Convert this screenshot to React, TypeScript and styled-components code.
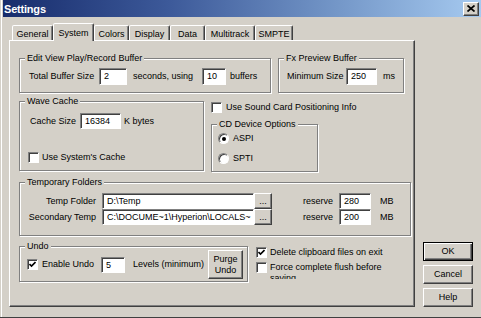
import React from "react";
import styled, { createGlobalStyle } from "styled-components";

const GlobalStyle = createGlobalStyle`
  html, body {
    margin: 0;
    padding: 0;
    background: #d4d0c8;
  }
  body {
    font-family: "Liberation Sans", Arial, sans-serif;
    font-size: 9px;
    color: #000;
  }
  * {
    box-sizing: border-box;
  }
`;

const Window = styled.div`
  width: 481px;
  height: 318px;
  display: flex;
  flex-direction: column;
  background: #d4d0c8;
  padding-left: 3px;
  border-bottom: 1px solid #404040;
  box-shadow: inset 1px 0 0 #d4d0c8, inset 2px 0 0 #ffffff;
  overflow: hidden;
`;

const TitleBar = styled.div`
  height: 17px;
  flex-shrink: 0;
  display: flex;
  align-items: center;
  justify-content: space-between;
  padding: 0 2px 0 1px;
  background: linear-gradient(to right, #172c6c 0%, #3d5a9a 35%, #7497c8 70%, #a6caf0 100%);
`;

const Title = styled.span`
  color: #ffffff;
  font-size: 11px;
  font-weight: bold;
  letter-spacing: -0.2px;
`;

const CloseButton = styled.div`
  width: 16px;
  height: 14px;
  display: flex;
  align-items: center;
  justify-content: center;
  background: #d4d0c8;
  border: 1px solid;
  border-color: #ffffff #404040 #404040 #ffffff;
  box-shadow: inset -1px -1px 0 #808080;
`;

const Body = styled.div`
  flex: 1;
  display: flex;
  padding: 6px 0 10px 6px;
`;

const TabArea = styled.div`
  width: 406px;
  display: flex;
  flex-direction: column;
`;

const TabStrip = styled.div`
  height: 17px;
  display: flex;
  align-items: flex-end;
  padding-left: 3px;
`;

const Tab = styled.div<{ $w: number; $active?: boolean }>`
  position: relative;
  z-index: ${(p) => (p.$active ? 1 : 0)};
  width: ${(p) => p.$w}px;
  height: ${(p) => (p.$active ? 18 : 15)}px;
  margin-bottom: ${(p) => (p.$active ? -1 : 0)}px;
  display: flex;
  align-items: center;
  justify-content: center;
  padding-top: ${(p) => (p.$active ? 0 : 1)}px;
  background: #d4d0c8;
  border: 1px solid;
  border-bottom: none;
  border-color: #ffffff #404040 transparent #ffffff;
  border-radius: 2px 2px 0 0;
  box-shadow: inset -1px 0 0 #808080;
  white-space: nowrap;
`;

const Panel = styled.div`
  width: 406px;
  height: 267px;
  display: flex;
  flex-direction: column;
  padding-left: 9px;
  border: 1px solid;
  border-color: #ffffff #404040 #404040 #ffffff;
  box-shadow: inset -1px -1px 0 #808080;
`;

const PanelRow = styled.div<{ $mt: number; $gap: number }>`
  display: flex;
  align-items: flex-start;
  margin-top: ${(p) => p.$mt}px;
  gap: ${(p) => p.$gap}px;
`;

const Group = styled.div<{ $w: number; $h: number; $pad: string; $mt?: number }>`
  position: relative;
  width: ${(p) => p.$w}px;
  height: ${(p) => p.$h}px;
  margin-top: ${(p) => p.$mt ?? 0}px;
  padding: ${(p) => p.$pad};
  display: flex;
  flex-direction: column;
  border: 1px solid #808080;
  box-shadow: 1px 1px 0 #ffffff, inset 1px 1px 0 #ffffff;
`;

const Legend = styled.span`
  position: absolute;
  top: -6px;
  left: 5px;
  padding: 0 2px;
  line-height: 11px;
  background: #d4d0c8;
  white-space: nowrap;
`;

const Line = styled.div<{ $mt?: number; $ml?: number; $h?: number }>`
  display: flex;
  align-items: center;
  margin-top: ${(p) => p.$mt ?? 0}px;
  margin-left: ${(p) => p.$ml ?? 0}px;
  height: ${(p) => (p.$h ? `${p.$h}px` : "auto")};
`;

const Caption = styled.span<{ $w?: number; $ml?: number; $right?: boolean }>`
  display: inline-block;
  flex-shrink: 0;
  width: ${(p) => (p.$w ? `${p.$w}px` : "auto")};
  margin-left: ${(p) => p.$ml ?? 0}px;
  text-align: ${(p) => (p.$right ? "right" : "left")};
  white-space: nowrap;
  line-height: 11px;
`;

const Field = styled.span<{ $w: number; $h?: number; $ml?: number }>`
  display: block;
  flex-shrink: 0;
  width: ${(p) => p.$w}px;
  height: ${(p) => p.$h ?? 17}px;
  margin-left: ${(p) => p.$ml ?? 0}px;
  padding: 0 1px 0 4px;
  line-height: ${(p) => (p.$h ?? 17) - 2}px;
  background: #ffffff;
  border: 1px solid;
  border-color: #808080 #ffffff #ffffff #808080;
  box-shadow: inset 1px 1px 0 #404040;
  white-space: nowrap;
  overflow: hidden;
`;

const Box = styled.span`
  width: 11px;
  height: 11px;
  flex-shrink: 0;
  display: inline-flex;
  align-items: center;
  justify-content: center;
  background: #ffffff;
  border: 1px solid;
  border-color: #808080 #ffffff #ffffff #808080;
  box-shadow: inset 1px 1px 0 #404040;
`;

const RadioDot = styled.span<{ $on?: boolean }>`
  width: 11px;
  height: 11px;
  flex-shrink: 0;
  display: inline-flex;
  align-items: center;
  justify-content: center;
  border-radius: 50%;
  background: #ffffff;
  border: 1px solid;
  border-color: #808080 #ffffff #ffffff #808080;
  box-shadow: inset 1px 1px 0 #404040;
  &::after {
    content: "";
    width: 4px;
    height: 4px;
    border-radius: 50%;
    background: ${(p) => (p.$on ? "#000" : "transparent")};
  }
`;

const CheckItem = styled.div<{ $gap?: number }>`
  display: flex;
  align-items: flex-start;
  gap: ${(p) => p.$gap ?? 4}px;
`;

const WrapText = styled.span`
  width: 125px;
  line-height: 11px;
  max-height: 17px;
  overflow: hidden;
`;

const Stack = styled.div<{ $w?: number; $gap?: number; $mt?: number }>`
  display: flex;
  flex-direction: column;
  width: ${(p) => (p.$w ? `${p.$w}px` : "auto")};
  gap: ${(p) => p.$gap ?? 0}px;
  margin-top: ${(p) => p.$mt ?? 0}px;
`;

const WinButton = styled.div<{ $w: number; $h: number; $default?: boolean }>`
  width: ${(p) => p.$w}px;
  height: ${(p) => p.$h}px;
  flex-shrink: 0;
  display: flex;
  align-items: center;
  justify-content: center;
  text-align: center;
  line-height: 11px;
  background: #d4d0c8;
  border: 1px solid;
  border-color: ${(p) => (p.$default ? "#000" : "#ffffff #404040 #404040 #ffffff")};
  box-shadow: ${(p) =>
    p.$default
      ? "inset 1px 1px 0 #ffffff, inset -1px -1px 0 #404040, inset -2px -2px 0 #808080"
      : "inset -1px -1px 0 #808080"};
`;

const ButtonColumn = styled.div`
  width: 50px;
  margin-left: 8px;
  display: flex;
  flex-direction: column;
  justify-content: flex-end;
  gap: 4px;
`;

const CheckMark = () => (
  <svg width="7" height="7" viewBox="0 0 7 7">
    <polyline points="0.5,3 2.5,5 6.5,1" fill="none" stroke="#000" strokeWidth="1.6" />
  </svg>
);

const Check = ({ checked }: { checked?: boolean }) => <Box>{checked && <CheckMark />}</Box>;

const tabs = [
  { label: "General", w: 41 },
  { label: "System", w: 41, active: true },
  { label: "Colors", w: 35 },
  { label: "Display", w: 41 },
  { label: "Data", w: 35 },
  { label: "Multitrack", w: 50 },
  { label: "SMPTE", w: 38 },
];

const folders = [
  { label: "Temp Folder", path: "D:\\Temp", reserve: "280" },
  { label: "Secondary Temp", path: "C:\\DOCUME~1\\Hyperion\\LOCALS~", reserve: "200" },
];

export default function App() {
  return (
    <>
      <GlobalStyle />
      <Window>
        <TitleBar>
          <Title>Settings</Title>
          <CloseButton>
            <svg width="8" height="7" viewBox="0 0 8 7">
              <path d="M0.5 0.5 L7.5 6.5 M7.5 0.5 L0.5 6.5" stroke="#000" strokeWidth="1.7" />
            </svg>
          </CloseButton>
        </TitleBar>
        <Body>
          <TabArea>
            <TabStrip>
              {tabs.map((t) => (
                <Tab key={t.label} $w={t.w} $active={t.active}>
                  {t.label}
                </Tab>
              ))}
            </TabStrip>
            <Panel>
              <PanelRow $mt={17} $gap={7}>
                <Group $w={252} $h={35} $pad="9px 0 0 9px">
                  <Legend>Edit View Play/Record Buffer</Legend>
                  <Line>
                    <Caption $w={70}>Total Buffer Size</Caption>
                    <Field $w={28}>2</Field>
                    <Caption $ml={6} $w={69}>
                      seconds, using
                    </Caption>
                    <Field $w={24}>10</Field>
                    <Caption $ml={4}>buffers</Caption>
                  </Line>
                </Group>
                <Group $w={126} $h={35} $pad="9px 0 0 8px">
                  <Legend>Fx Preview Buffer</Legend>
                  <Line>
                    <Caption $w={59}>Minimum Size</Caption>
                    <Field $w={31}>250</Field>
                    <Caption $ml={6}>ms</Caption>
                  </Line>
                </Group>
              </PanelRow>

              <PanelRow $mt={8} $gap={7}>
                <Group $w={185} $h={70} $pad="11px 0 0 10px">
                  <Legend>Wave Cache</Legend>
                  <Line>
                    <Caption $w={50}>Cache Size</Caption>
                    <Field $w={41} $h={16}>
                      16384
                    </Field>
                    <Caption $ml={3}>K bytes</Caption>
                  </Line>
                  <Line $mt={23} $ml={-2}>
                    <CheckItem $gap={3}>
                      <Check />
                      <Caption>Use System's Cache</Caption>
                    </CheckItem>
                  </Line>
                </Group>
                <Stack $w={107} $mt={1}>
                  <CheckItem>
                    <Check />
                    <Caption>Use Sound Card Positioning Info</Caption>
                  </CheckItem>
                  <Group $w={107} $h={48} $mt={11} $pad="8px 0 0 6px">
                    <Legend>CD Device Options</Legend>
                    <Stack $gap={9}>
                      <CheckItem>
                        <RadioDot $on />
                        <Caption>ASPI</Caption>
                      </CheckItem>
                      <CheckItem>
                        <RadioDot />
                        <Caption>SPTI</Caption>
                      </CheckItem>
                    </Stack>
                  </Group>
                </Stack>
              </PanelRow>

              <PanelRow $mt={10} $gap={0}>
                <Group $w={392} $h={54} $pad="10px 0 0 0">
                  <Legend>Temporary Folders</Legend>
                  {folders.map((f) => (
                    <Line key={f.label}>
                      <Caption $w={76} $right>
                        {f.label}
                      </Caption>
                      <Field $ml={6} $w={152} $h={16}>
                        {f.path}
                      </Field>
                      <WinButton $w={18} $h={16}>
                        ...
                      </WinButton>
                      <Caption $w={61} $right>
                        reserve
                      </Caption>
                      <Field $ml={6} $w={32} $h={16}>
                        {f.reserve}
                      </Field>
                      <Caption $ml={9}>MB</Caption>
                    </Line>
                  ))}
                </Group>
              </PanelRow>

              <PanelRow $mt={10} $gap={8}>
                <Group $w={229} $h={36} $pad="3px 0 0 7px">
                  <Legend>Undo</Legend>
                  <Line $h={29}>
                    <Check checked />
                    <Caption $ml={4} $w={59}>
                      Enable Undo
                    </Caption>
                    <Field $w={24} $h={16}>
                      5
                    </Field>
                    <Caption $ml={8} $w={75}>
                      Levels (minimum)
                    </Caption>
                    <WinButton $w={35} $h={29}>
                      Purge
                      <br />
                      Undo
                    </WinButton>
                  </Line>
                </Group>
                <Stack $mt={1} $gap={4}>
                  <CheckItem $gap={3}>
                    <Check checked />
                    <Caption>Delete clipboard files on exit</Caption>
                  </CheckItem>
                  <CheckItem $gap={3}>
                    <Check />
                    <WrapText>Force complete flush before saving</WrapText>
                  </CheckItem>
                </Stack>
              </PanelRow>
            </Panel>
          </TabArea>
          <ButtonColumn>
            <WinButton $w={50} $h={19} $default>
              OK
            </WinButton>
            <WinButton $w={50} $h={19}>
              Cancel
            </WinButton>
            <WinButton $w={50} $h={19}>
              Help
            </WinButton>
          </ButtonColumn>
        </Body>
      </Window>
    </>
  );
}
